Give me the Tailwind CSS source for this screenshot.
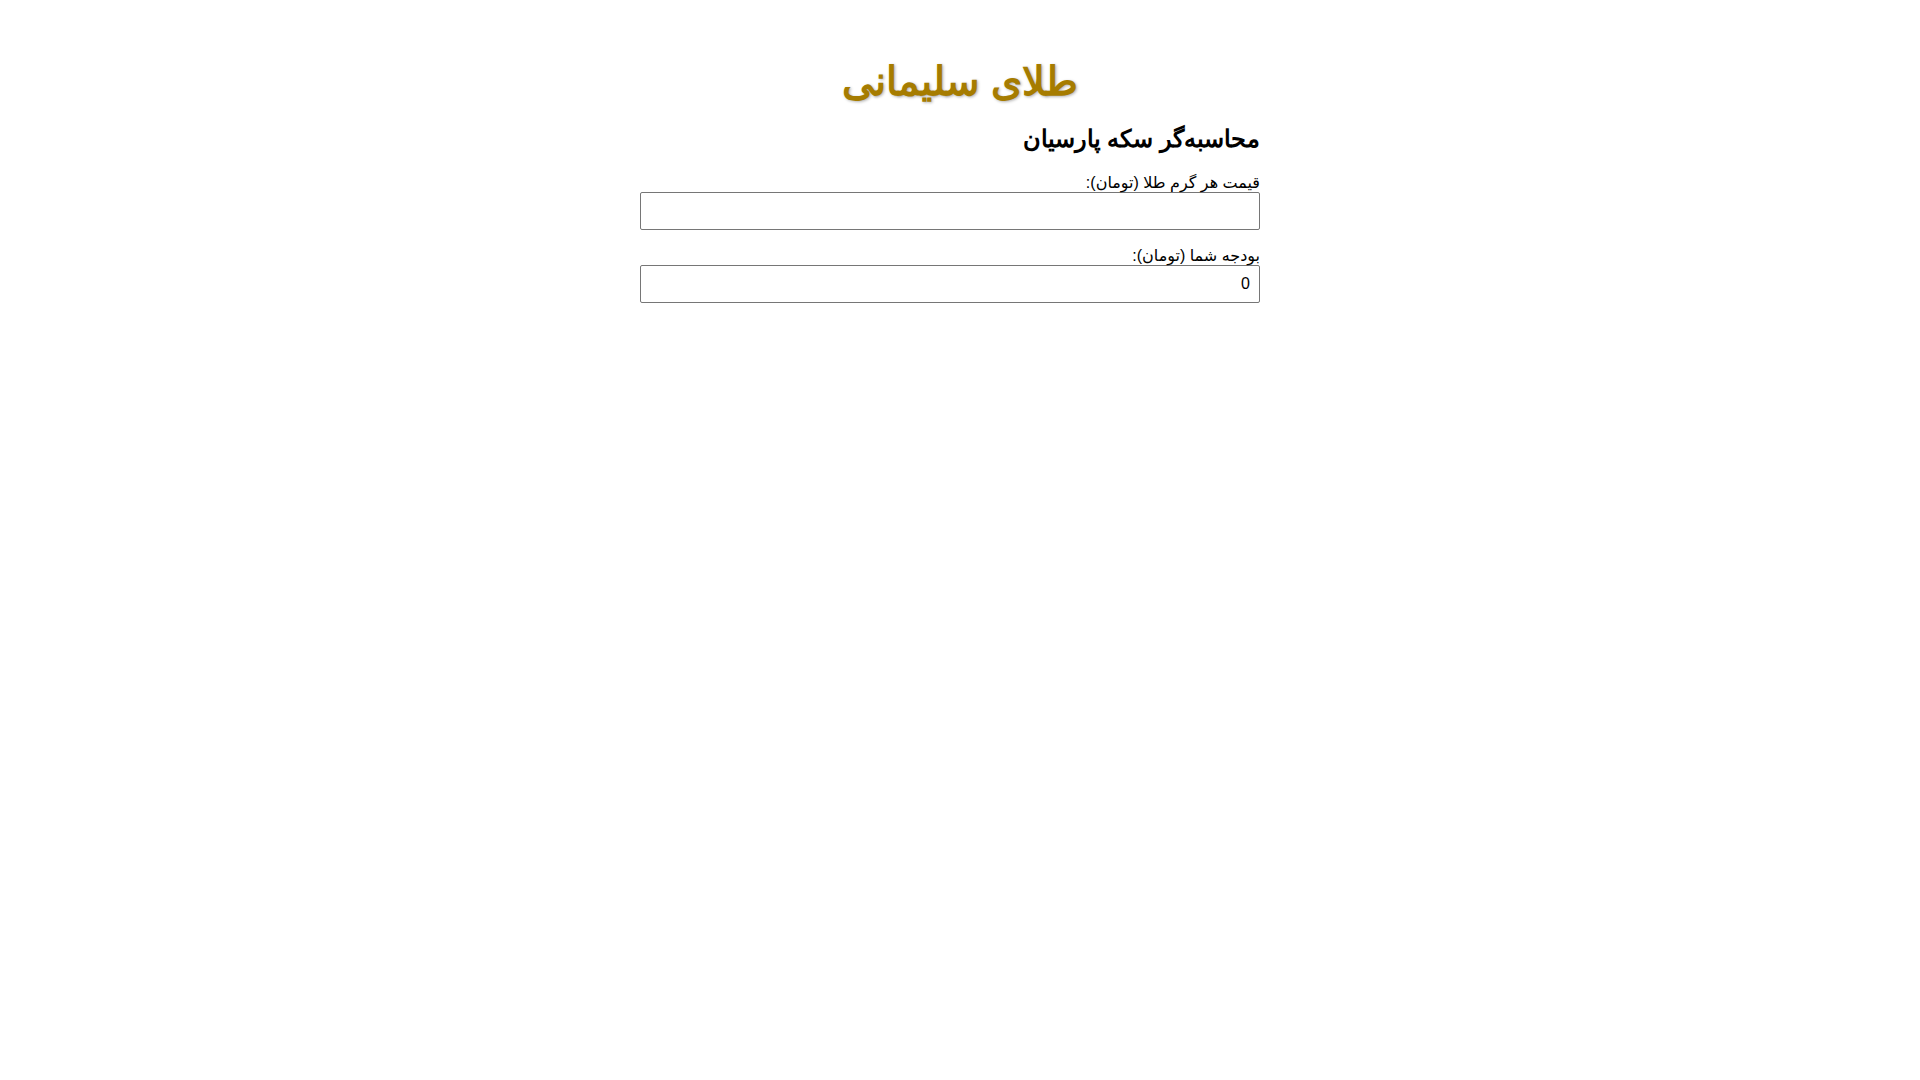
<!DOCTYPE html>
<html lang="fa" dir="rtl">
<head>
<meta charset="utf-8">
<meta name="viewport" content="width=device-width, initial-scale=1">
<title>طلای سلیمانی</title>
<script src="https://cdn.jsdelivr.net/npm/@tailwindcss/browser@4"></script>
</head>
<body class="bg-white text-black font-['Liberation_Sans',sans-serif]">
<main class="mx-auto max-w-[640px] px-5 pt-[58px]">
<h1 class="text-center text-[40px] leading-[46px] font-bold text-[#a67c00] [text-shadow:1px_1px_3px_rgba(0,0,0,0.3)]">طلای سلیمانی</h1>
<h2 class="mt-[21px] text-2xl leading-7 font-bold">محاسبه‌گر سکه پارسیان</h2>
<form class="mt-[21px] -ml-5 flex flex-col gap-[17px] font-['Liberation_Sans','DejaVu_Sans',sans-serif]">
<div>
<label for="price" class="block text-base leading-[18px]">قیمت هر گرم طلا (تومان):</label>
<input id="price" type="text" class="block h-[38px] w-full rounded-xs border border-[#767676] px-[9px] text-base">
</div>
<div>
<label for="budget" class="block text-base leading-[18px]">بودجه شما (تومان):</label>
<input id="budget" type="text" value="0" class="block h-[38px] w-full rounded-xs border border-[#767676] px-[9px] text-base">
</div>
</form>
</main>
</body>
</html>
